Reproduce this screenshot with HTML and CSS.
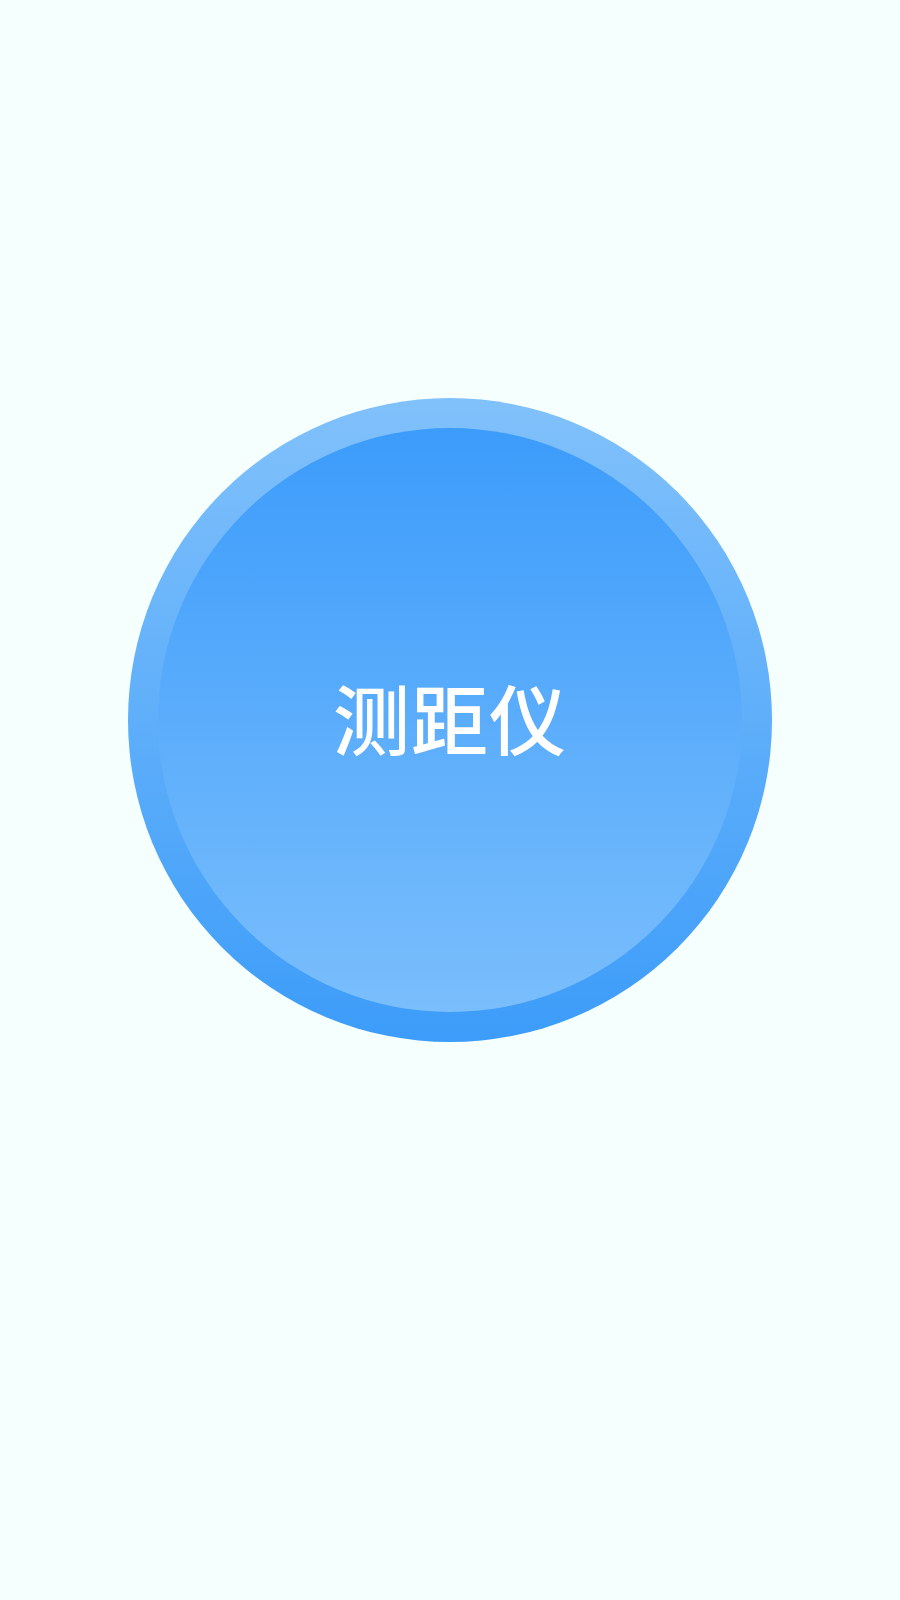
FILE: index.html
```html
<!DOCTYPE html>
<html lang="zh-CN">
<head>
  <meta charset="UTF-8" />
  <meta name="viewport" content="width=device-width, initial-scale=1" />
  <title>测距仪</title>
  <link rel="stylesheet" href="styles.css">
</head>
<body>
  <div class="page">
    <button class="ring">
      <span class="core">测距仪</span>
    </button>
  </div>
</body>
</html>
```

FILE: styles.css
```css
* { margin: 0; padding: 0; box-sizing: border-box; }
html, body {
  height: 100%;
  background: #f5fffe;
  font-family: "Noto Sans CJK SC", "Noto Sans", sans-serif;
}
.page {
  height: 1600px;
  display: flex;
  justify-content: center;
  padding-top: 398px;
}
.ring {
  width: 644px;
  height: 644px;
  padding: 30px;
  border: none;
  border-radius: 50%;
  background: linear-gradient(to bottom, #81c1fb, #3c9cf9);
  cursor: pointer;
}
.core {
  width: 100%;
  height: 100%;
  border-radius: 50%;
  display: flex;
  align-items: center;
  justify-content: center;
  padding-bottom: 8px;
  background: linear-gradient(to bottom, #3c9cfb, #7abefc);
  color: #fff;
  font-size: 77px;
  font-weight: 500;
  letter-spacing: 1px;
  font-family: "Noto Sans CJK SC", "Noto Sans", sans-serif;
}
```
